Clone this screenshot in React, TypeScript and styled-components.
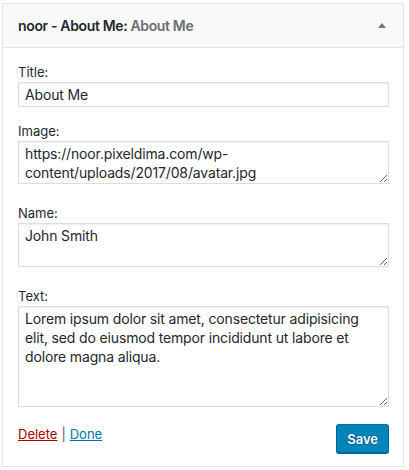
import React from 'react';
import styled, {createGlobalStyle} from "styled-components";

const GlobalStyle = createGlobalStyle`
  html, body {
    margin: 0;
    padding: 0;
    background: #fff;
  }

  body {
    font-family: Inter, "Liberation Sans", Arial, sans-serif;
    color: #23282d;
  }
`

type FieldPropsType = {
    label: string
    value: string
    multiline?: boolean
    height?: number
}

const Field = (props: FieldPropsType) => {
    return (
        <StyledField multiline={props.multiline}>
            <Label>{props.label}</Label>
            {props.multiline
                ? <TextArea defaultValue={props.value} boxHeight={props.height || 44}/>
                : <TextInput type="text" defaultValue={props.value}/>}
        </StyledField>
    );
};

export default function App() {
    return (
        <Page>
            <GlobalStyle/>
            <Widget>
                <WidgetTop>
                    <WidgetTitle>
                        noor - About Me: <InWidgetTitle>About Me</InWidgetTitle>
                    </WidgetTitle>
                    <ToggleArrow/>
                </WidgetTop>
                <WidgetBody>
                    <Field label="Title:" value="About Me"/>
                    <Field label="Image:" value="https://noor.pixeldima.com/wp-content/uploads/2017/08/avatar.jpg"
                           multiline height={43}/>
                    <Field label="Name:" value="John Smith" multiline height={44}/>
                    <Field label="Text:"
                           value="Lorem ipsum dolor sit amet, consectetur adipisicing elit, sed do eiusmod tempor incididunt ut labore et dolore magna aliqua."
                           multiline height={101}/>
                    <Actions>
                        <Links>
                            <ActionLink href={'#'} danger>Delete</ActionLink>
                            <Separator>|</Separator>
                            <ActionLink href={'#'}>Done</ActionLink>
                        </Links>
                        <SaveButton type="button">Save</SaveButton>
                    </Actions>
                </WidgetBody>
            </Widget>
        </Page>
    );
}

const Page = styled.div`
  padding: 3px 5px 0 2px;
`

const Widget = styled.div`
  border: 1px solid #e5e5e5;
  background: #fff;
  box-shadow: 0 1px 1px rgba(0, 0, 0, 0.04);
`

const WidgetTop = styled.div`
  display: flex;
  align-items: center;
  justify-content: space-between;
  height: 43px;
  padding: 0 17px 0 15px;
  background: #f9f9f9;
  border-bottom: 1px solid #e5e5e5;
`

const WidgetTitle = styled.h3`
  margin: 0;
  font-size: 14px;
  font-weight: 600;
  letter-spacing: -0.35px;
  color: #23282d;
`

const InWidgetTitle = styled.span`
  color: #686e74;
`

const ToggleArrow = styled.span`
  width: 0;
  height: 0;
  border-left: 4px solid transparent;
  border-right: 4px solid transparent;
  border-bottom: 5px solid #72777c;
`

const WidgetBody = styled.div`
  padding: 15px 14px 13px 15px;
`

const StyledField = styled.div<{ multiline?: boolean }>`
  display: flex;
  flex-direction: column;
  margin-bottom: ${props => props.multiline ? '20px' : '15px'};
`

const Label = styled.label`
  font-size: 13px;
  line-height: 18px;
  margin-bottom: 1px;
  color: #23282d;
`

const TextInput = styled.input`
  box-sizing: border-box;
  width: 100%;
  height: 25px;
  margin: 0;
  padding: 2px 6px;
  border: 1px solid #ddd;
  box-shadow: inset 0 1px 2px rgba(0, 0, 0, 0.07);
  font-family: inherit;
  font-size: 14px;
  letter-spacing: -0.15px;
  color: #23282d;
  outline: none;
`

const TextArea = styled.textarea<{ boxHeight: number }>`
  box-sizing: border-box;
  display: block;
  width: 100%;
  height: ${props => props.boxHeight}px;
  margin: 0;
  padding: 2px 6px;
  border: 1px solid #ddd;
  box-shadow: inset 0 1px 2px rgba(0, 0, 0, 0.07);
  font-family: inherit;
  font-size: 14px;
  line-height: 19px;
  letter-spacing: -0.15px;
  color: #23282d;
  outline: none;
`

const Actions = styled.div`
  display: flex;
  justify-content: space-between;
  align-items: flex-start;
  margin-top: -3px;
`

const Links = styled.div`
  font-size: 13px;
  line-height: 18px;
  padding-top: 1px;
`

const ActionLink = styled.a<{ danger?: boolean }>`
  color: ${props => props.danger ? '#a00' : '#0073aa'};
  text-decoration: underline;
`

const Separator = styled.span`
  color: #555;
  margin: 0 4px;
`

const SaveButton = styled.button`
  height: 29px;
  padding: 0 10px;
  border: 1px solid;
  border-color: #0073aa #006799 #006799;
  border-radius: 3px;
  background: #0085ba;
  box-shadow: 0 1px 0 #006799;
  color: #fff;
  text-shadow: 0 -1px 1px #006799, 1px 0 1px #006799, 0 1px 1px #006799, -1px 0 1px #006799;
  font-family: inherit;
  font-size: 13px;
  font-weight: 600;
  cursor: pointer;
`
